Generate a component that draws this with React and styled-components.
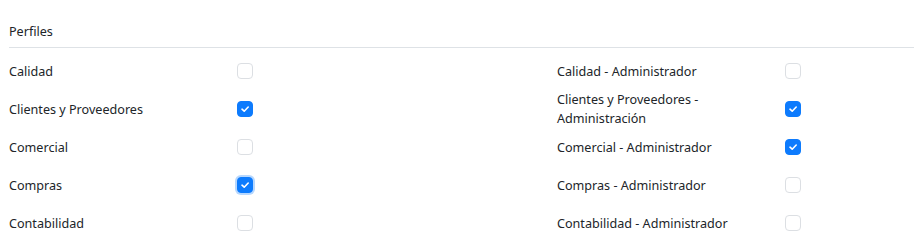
import React from "react";
import styled, { createGlobalStyle, css } from "styled-components";

const Global = createGlobalStyle`
  html, body { margin: 0; padding: 0; background: #fff; }
  body { font-family: "Noto Sans", "Open Sans", sans-serif; color: #212529; }
`;

const Panel = styled.section`
  padding: 21px 0 0 9px;
  width: 905px;
`;

const Title = styled.div`
  font-size: 12.6px;
  line-height: 22px;
  padding-bottom: 4px;
  border-bottom: 1px solid #dee2e6;
`;

const Grid = styled.div`
  display: grid;
  grid-template-columns: 228px 320px 228px 1fr;
  grid-auto-rows: 38px;
  padding-top: 4px;
`;

const Label = styled.div`
  font-size: 12.6px;
  line-height: 19px;
  display: flex;
  align-items: center;
  padding-right: ${(p) => (p.$wrap ? "20px" : "0")};
`;

const Cell = styled.div`
  display: flex;
  align-items: center;
`;

const Box = styled.span`
  width: 16px;
  height: 16px;
  box-sizing: border-box;
  border-radius: 4px;
  border: 1px solid ${(p) => (p.$checked ? "#0d7bfd" : "#dcdfe3")};
  background: ${(p) => (p.$checked ? "#0d7bfd" : "#fff")};
  display: inline-flex;
  align-items: center;
  justify-content: center;
  ${(p) =>
    p.$focus &&
    css`
      box-shadow: 0 0 0 2px rgba(13, 123, 253, 0.3);
    `}
`;

const Check = ({ checked, focus }) => (
  <Box $checked={checked} $focus={focus}>
    {checked && (
      <svg width="10" height="10" viewBox="0 0 10 10">
        <path d="M2 5.2 L4.2 7.2 L8.2 3" fill="none" stroke="#fff" strokeWidth="1.6" strokeLinecap="round" strokeLinejoin="round" />
      </svg>
    )}
  </Box>
);

const rows = [
  ["Calidad", false, false, "Calidad - Administrador", false],
  ["Clientes y Proveedores", true, false, "Clientes y Proveedores - Administración", true],
  ["Comercial", false, false, "Comercial - Administrador", true],
  ["Compras", true, true, "Compras - Administrador", false],
  ["Contabilidad", false, false, "Contabilidad - Administrador", false],
];

export default function App() {
  return (
    <>
      <Global />
      <Panel>
        <Title>Perfiles</Title>
        <Grid>
          {rows.map(([l, lc, lf, r, rc]) => (
            <React.Fragment key={l}>
              <Label>{l}</Label>
              <Cell><Check checked={lc} focus={lf} /></Cell>
              <Label $wrap>{r}</Label>
              <Cell><Check checked={rc} /></Cell>
            </React.Fragment>
          ))}
        </Grid>
      </Panel>
    </>
  );
}
